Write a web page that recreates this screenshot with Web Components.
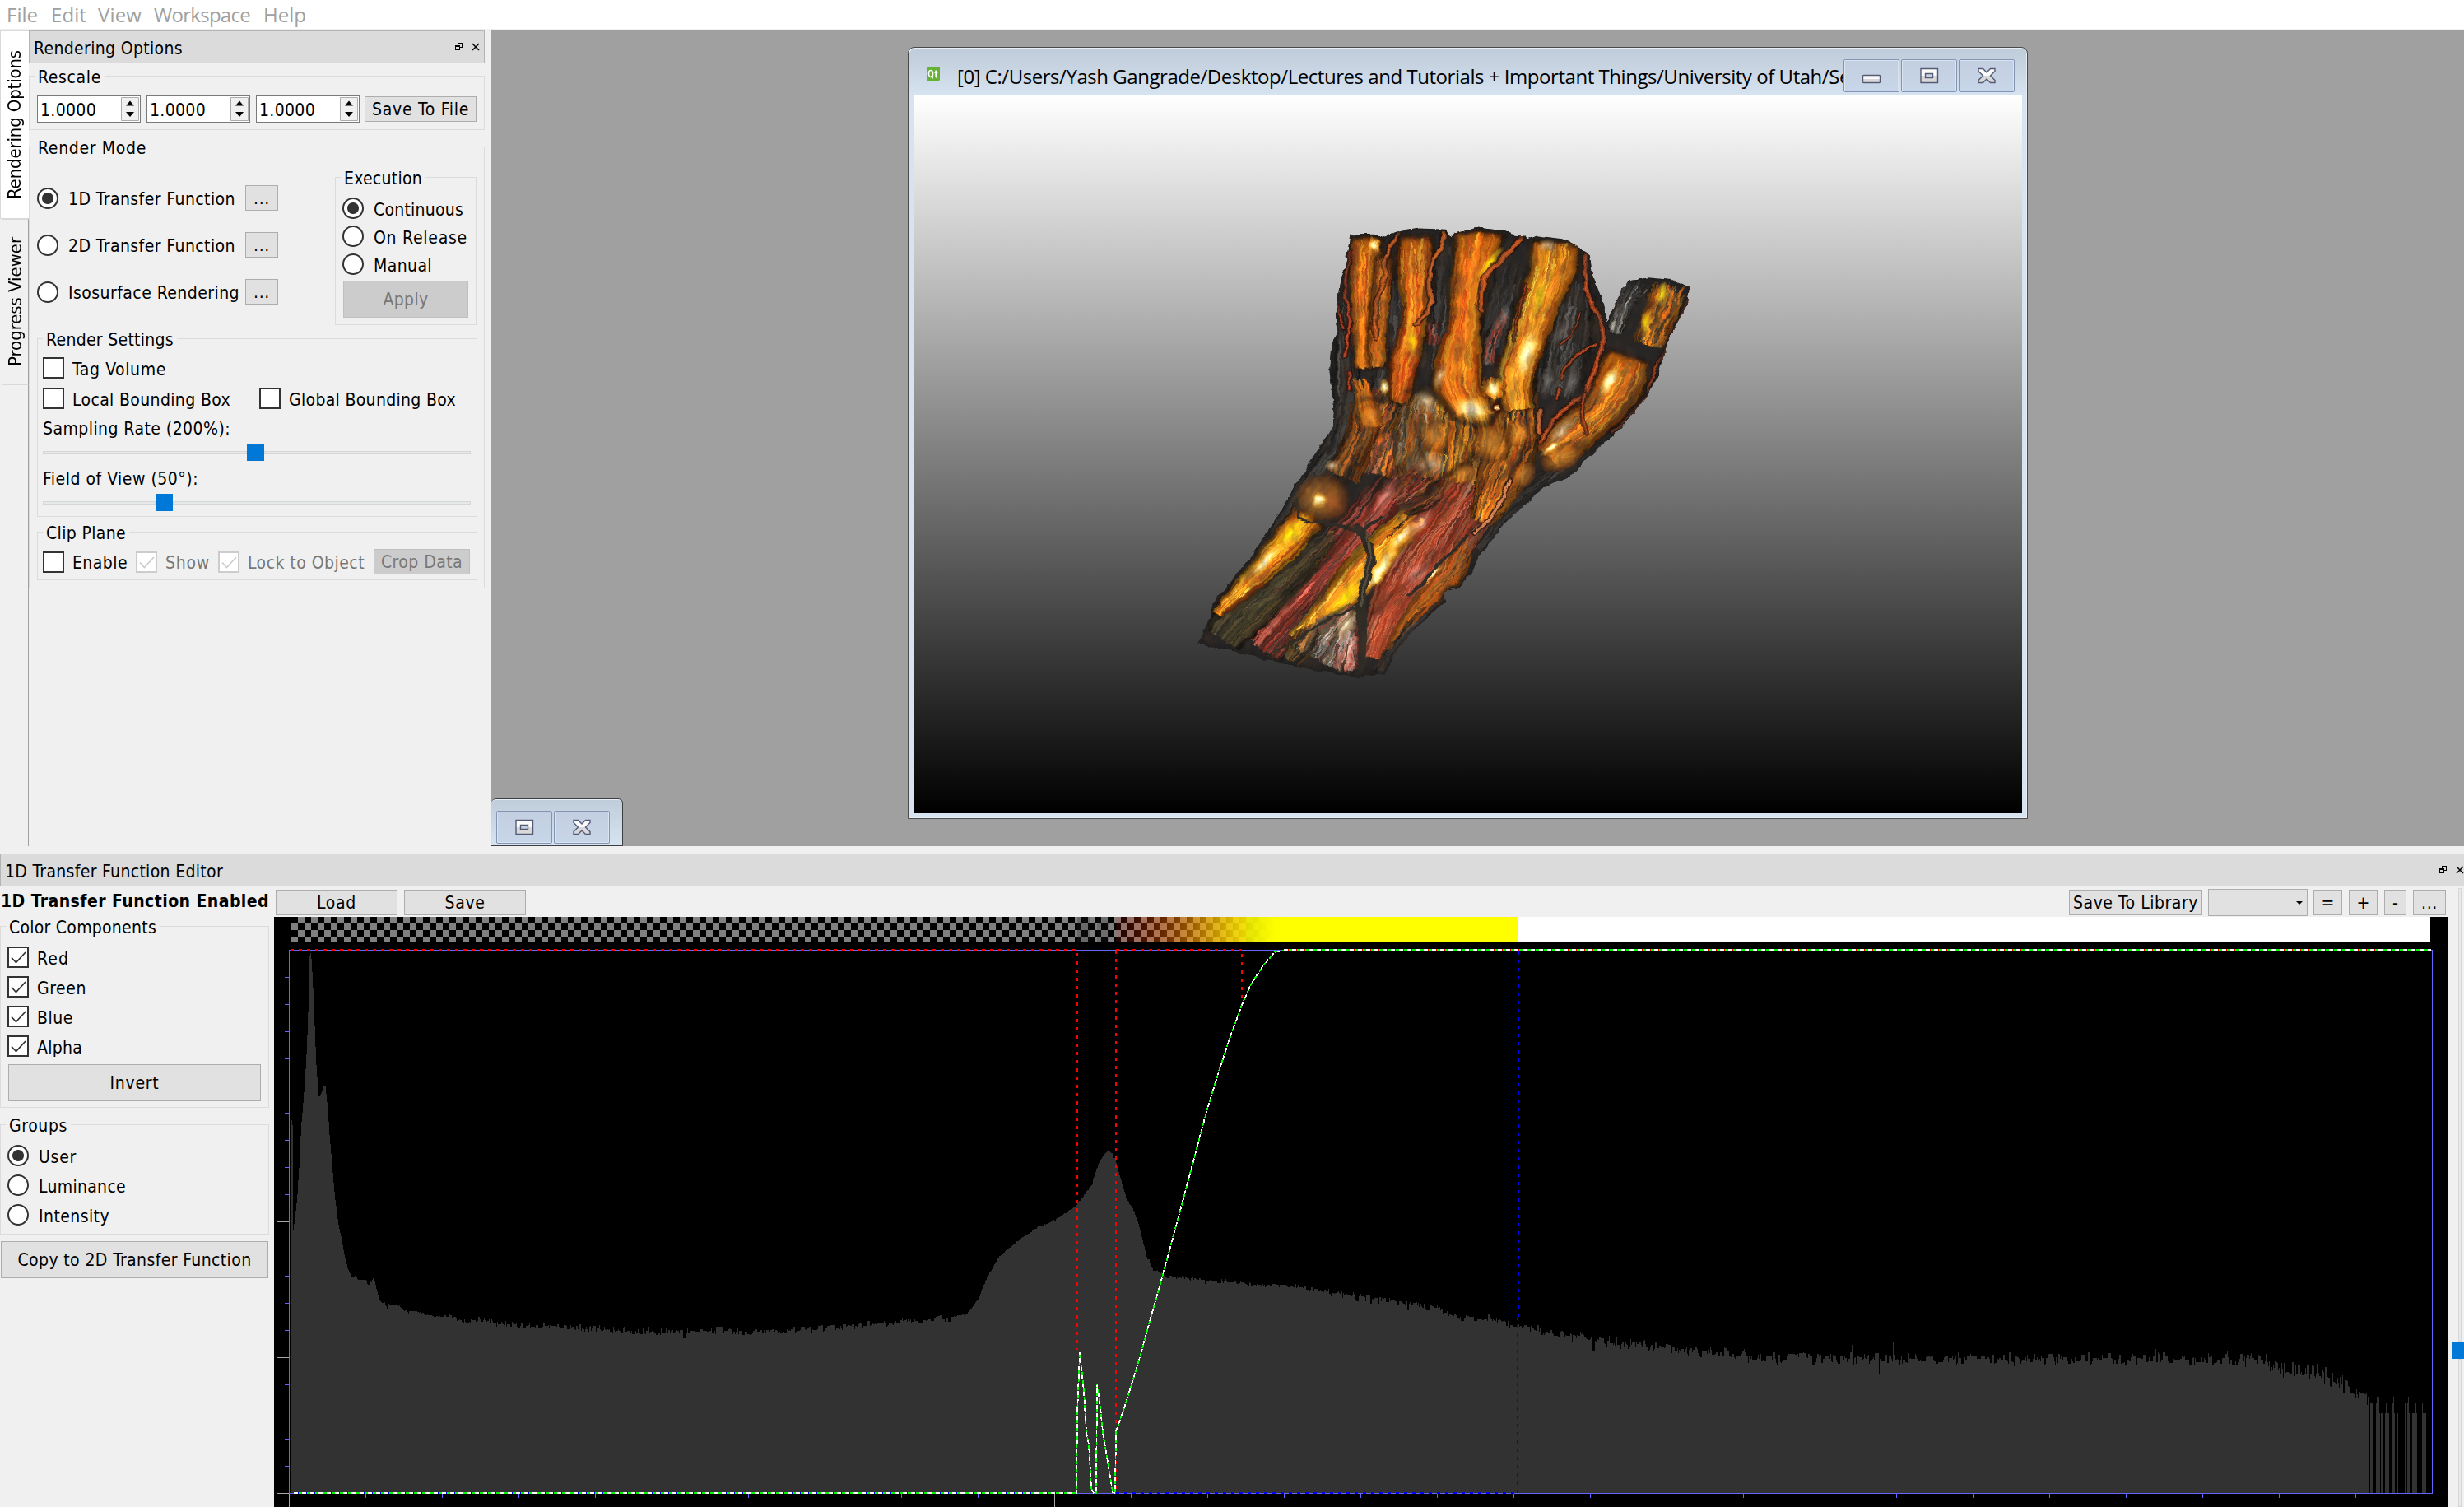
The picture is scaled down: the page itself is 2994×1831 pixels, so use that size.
<!DOCTYPE html>
<html lang="en">
<head>
<meta charset="utf-8">
<title>Volume Renderer</title>
<style>
html,body{margin:0;padding:0;background:#f0f0f0}
body{width:2994px;height:1831px;overflow:hidden;font:21px/26px "DejaVu Sans Condensed","DejaVu Sans","Liberation Sans",sans-serif;font-stretch:condensed;color:#000}
</style>
</head>
<body>
<iv-app></iv-app>
<script>
/* Base element: renders a template string and fits its label to a nominal width. */
class Base extends HTMLElement {
  connectedCallback() {
    if (this.shadowRoot) return;
    this.attachShadow({mode: 'open'}).innerHTML = '<style>*{box-sizing:border-box}:host{box-sizing:border-box;display:block}' + this.css() + '</style>' + this.html();
    this.fit();
  }
  css() { return ''; }
  html() { return '<slot></slot>'; }
  at(n, d = '') { return this.hasAttribute(n) ? this.getAttribute(n) : d; }
  fit() {
    const w = +this.at('w', 0), t = this.shadowRoot.querySelector('.t');
    if (!w || !t) return;
    const r = t.getBoundingClientRect(), n = (this.at('label') || this.textContent).trim().length;
    t.style.letterSpacing = ((w - (this.vertical ? r.height : r.width)) / n).toFixed(3) + 'px';
  }
}
const def = (n, c) => customElements.define(n, c);
const T = '<span class="t"><slot></slot></span>';
const TCSS = '.t{white-space:pre;display:inline-block;flex:none}';

class Label extends Base { css() { return TCSS + ':host{height:26px}'; } html() { return T; } }

class Menu extends Base {
  css() { return TCSS + ':host{font:24px/36px "Open Sans","Noto Sans",sans-serif;color:#a0a0a0}::slotted(u){text-underline-offset:4px;text-decoration-thickness:1px}'; }
  html() { return T; }
}

class Tab extends Base {
  get vertical() { return true; }
  css() { return TCSS + `:host{writing-mode:vertical-rl;transform:rotate(180deg);display:flex;align-items:center;justify-content:center;font-size:22px;border:1px solid #d9d9d9;border-left:0;background:#f0f0f0}
    :host([active]){background:#fff}:host(:not([active])){border-left:1px solid #a0a0a0}`; }
  html() { return T; }
}

class DockTitle extends Base {
  css() { return TCSS + ':host{display:flex;align-items:center;background:#dbdbdb;border:1px solid #b4b4b4;padding-left:5px;height:40px}.t{padding-top:3px}svg{margin-left:auto;flex:none}'; }
  html() { return T + `<svg width="30" height="10" shape-rendering="crispEdges"><path fill="none" stroke="#000" stroke-width="1" d="M.5 3.500h5v5h-5zM.5 4.500h5M3 3V.5h5v5H6M3 1.500h5"/><path shape-rendering="auto" stroke="#000" stroke-width="1.500" d="M21 1l8 8M29 1l-8 8"/></svg>`; }
}

class Group extends Base {
  css() { return TCSS + ':host{display:flex;flex-direction:column;border:1px solid #dcdcdc;flex:none}.h{align-self:flex-start;flex:none;background:#f0f0f0;margin:-12px 0 0 6px;padding:0 4px;height:26px}'; }
  html() { return `<div class="h"><span class="t">${this.at('label')}</span></div><slot></slot>`; }
}

class Btn extends Base {
  css() { return TCSS + ':host{display:flex;align-items:center;justify-content:center;background:#e1e1e1;border:1px solid #adadad;height:31px;flex:none}:host([off]){background:#ccc;border-color:#bfbfbf;color:#787878}.t{padding-top:1px}'; }
  html() { return T; }
}

class Radio extends Base {
  css() { return TCSS + ':host{display:flex;align-items:center;flex:none}i{width:26px;height:26px;border:2px solid #333;border-radius:50%;background:#fff;flex:none;margin-right:12px}:host([on]) i{background:radial-gradient(circle,#333 6.500px,#fff 7.500px)}.t{padding-top:3px}'; }
  html() { return '<i></i>' + T; }
}

class Check extends Base {
  css() { return TCSS + ':host{display:flex;align-items:center;flex:none}svg{flex:none;margin-right:10px}.t{padding-top:3px}:host([off]){color:#787878}'; }
  html() {
    const c = this.hasAttribute('off') ? '#ccc' : '#333';
    return `<svg width="26" height="26"><rect x="1" y="1" width="24" height="24" fill="#fff" stroke="${c}" stroke-width="2"/>${this.hasAttribute('on') ? `<path d="M5 13.500l5.500 6L22 7" fill="none" stroke="${c}" stroke-width="1.700"/>` : ''}</svg>` + T;
  }
}

class Spin extends Base {
  css() { return TCSS + ':host{display:flex;align-items:center;width:126px;height:33px;background:#fff;border:1px solid #7a7a7a;padding:0 1px 0 3px;flex:none}.t{padding-top:2px}svg{margin-left:auto}'; }
  html() { return T + '<svg width="22" height="29"><g fill="#f0f0f0" stroke="#adadad"><path d="M.5.500h21v14H.5zM.5 14.500h21v14H.5z"/></g><path d="M6 10.500l5-6 5 6zM6 18l5 6 5-6z"/></svg>'; }
}

class Slider extends Base {
  css() { return ':host{display:flex;align-items:center;height:21px;width:520px}.r{flex:1;height:4px;background:#e7eaea;border:1px solid #d6d6d6}.k{width:21px;height:21px;background:#0078d7}.a{width:' + this.at('pos') + 'px;flex:none}'; }
  html() { return '<div class="r a"></div><div class="k"></div><div class="r"></div>'; }
}

class VSlider extends Base {
  css() { return ':host{display:flex;flex-direction:column;align-items:flex-end;padding-top:2px}.r{width:4px;background:#e7eaea;border:1px solid #d6d6d6;margin-right:3px;flex:1}.a{height:551px;flex:none}.k{width:14px;height:21px;background:#0078d7}'; }
  html() { return '<div class="r a"></div><div class="k"></div><div class="r"></div>'; }
}

/* MDI caption button: kind is min, max or close. */
class CapBtn extends Base {
  css() { return ':host{width:68px;height:40px;flex:none;border:1px solid #8394b4;border-radius:2px;box-shadow:inset 0 0 0 1px #dbe5f1;background:linear-gradient(#c3cfe0,#c8d6e9)}svg{display:block;margin:-1px}'; }
  html() {
    const g = {
      min: '<rect x="23.500" y="19.500" width="21" height="9" rx="1"/>',
      max: '<path fill-rule="evenodd" d="M24 11.500h20.500v17H24zM29.500 17.500v5h9v-5z"/>',
      close: '<path d="M24 11.500h5.500l4.500 4.500 4.500-4.500H44v3l-5.500 5.500 5.500 5.500v3h-5.500l-4.500-4.500-4.500 4.500H24v-3l5.500-5.500-5.500-5.500z"/>'
    }[this.at('kind')];
    return `<svg width="68" height="40"><defs><linearGradient id="m" x2="0" y2="1"><stop offset=".5" stop-color="#fafafa"/><stop offset=".52" stop-color="#d9d9d9"/></linearGradient></defs><g fill="url(#m)" stroke="#555b75" stroke-width="1.400">${g}</g></svg>`;
  }
}

class MdiWindow extends Base {
  css() { return TCSS + `:host{display:flex;flex-direction:column;width:1361px;height:938px;border:1px solid #4a4a4a;border-radius:8px 8px 0 0;background:linear-gradient(#bfccd9,#c6d2df 20px,#d6e3f0 58px);padding:0 6px 6px;box-shadow:inset 1px 1px 0 #e8eef5,inset -1px -1px 0 #e8eef5}
    .bar{display:flex;height:57px;flex:none}.cap{display:flex;align-items:center;width:1130px;overflow:hidden;padding:13px 0 0 16px;font:24px/32px "Open Sans","Noto Sans",sans-serif}.cap svg{margin:-6px 21px 0 0;flex:none}.b{display:flex;gap:2px;padding-top:14px}.view{flex:1;background:linear-gradient(#fff,#000);display:flex}`; }
  html() { return `<div class="bar"><div class="cap"><svg width="16" height="16"><path fill="#66b036" d="M1 0h15v15l-1 1H0V1z"/><g fill="none" stroke="#fff" stroke-width="1.700"><ellipse cx="5" cy="7.500" rx="2.500" ry="4"/><path d="M5.500 10l2 3.500M11.200 3.500v7q0 1.800 2 1.300M9.200 6h4.300"/></g></svg><span class="t">${this.at('label')}</span></div>
    <div class="b"><cap-btn kind="min"></cap-btn><cap-btn kind="max"></cap-btn><cap-btn kind="close"></cap-btn></div></div><div class="view"><slot></slot></div>`; }
}

/* Small seeded generator so the drawing is stable between loads. */
const rng = s => () => { s = s * 1664525 + 1013904223 >>> 0; return s / 4294967296; };

/* The rendered hand volume. */
class HandVolume extends Base {
  css() { return ':host{width:660px;height:600px;margin:135px 0 0 320px}svg{display:block}'; }
  html() {
    const R = rng(77), out = [];
    const mix = (c, k) => 'rgb(' + c.map(v => Math.max(0, Math.min(255, Math.round(v * k)))).join() + ')';
    const O = [[228,118,22],[205,88,20],[235,145,38],[190,110,24],[214,165,45],[176,62,22]],
          Br = [[150,72,24],[105,48,18],[180,98,30],[130,95,38]],
          Y = [[240,200,30],[225,150,25],[245,228,90],[200,130,20]],
          D = [[44,44,44],[28,28,28],[60,60,58],[78,78,78],[36,34,30]],
          Dg = [[60,58,38],[36,36,30],[84,80,58],[96,78,40],[30,30,30]],
          Rd = [[150,48,36],[112,36,28],[180,76,62],[80,32,26],[190,105,90]],
          Pk = [[165,72,48],[188,105,75],[140,58,32],[205,140,108],[158,44,24],[110,50,28]],
          Gw = [[130,130,125],[170,168,160],[80,80,78],[205,200,190],[110,105,60]];
    const line = p => { let d = 'M' + p[0]; for (let i = 1; i < p.length - 1; i++) d += 'Q' + p[i] + ' ' + [(p[i][0] + p[i+1][0]) / 2 | 0, (p[i][1] + p[i+1][1]) / 2 | 0]; return d + 'L' + p[p.length-1]; };
    const sample = (P, u) => { const f = u * (P.length - 1), i = Math.min(P.length - 2, f | 0), k = f - i; return [0,1,2].map(j => P[i][j] * (1-k) + P[i+1][j] * k); };
    const strand = (P, pal, n, edge = 1) => {
      if (edge) {
        const l = [], r = [];
        P.forEach((p, i) => { const a = P[Math.max(0, i-1)], b = P[Math.min(P.length-1, i+1)], L = Math.hypot(b[0]-a[0], b[1]-a[1]), nx = -(b[1]-a[1])/L, ny = (b[0]-a[0])/L; l.push([p[0]+nx*p[2], p[1]+ny*p[2]]); r.unshift([p[0]-nx*p[2], p[1]-ny*p[2]]); });
        out.push(`<path d="M${l.concat(r).join('L')}Z" fill="${mix(pal[0], .7)}" stroke="#1d0e08" stroke-opacity=".8" stroke-width="14" stroke-linejoin="round" filter="url(#b)"/>`);
      }
      for (let i = 0; i < n; i++) {
        const t = R() * 2 - 1, s = R() * .85, e = Math.min(1, s + .15 + R() * .45), c = pal[R() * pal.length | 0], q = [];
        for (let j = 0; j <= 5; j++) {
          const u = s + (e - s) * j / 5, p = sample(P, u), a = sample(P, Math.max(0, u-.06)), b = sample(P, Math.min(1, u+.06)), L = Math.hypot(b[0]-a[0], b[1]-a[1]) || 1;
          q.push([+(p[0] - (b[1]-a[1])/L*p[2]*t + R()*7-3.5).toFixed(1), +(p[1] + (b[0]-a[0])/L*p[2]*t + R()*7-3.5).toFixed(1)]);
        }
        out.push(`<path d="${line(q)}" stroke="${mix(c, (1.12 - .65*t*t) * (.82 + R()*.36))}" stroke-width="${(1.5+R()*6.5).toFixed(1)}" opacity="${(.3+R()*.45).toFixed(2)}"/>`);
      }
    };
    const blob = (x, y, rx, ry, a, g) => out.push(`<ellipse stroke="none" cx="${x}" cy="${y}" rx="${rx}" ry="${ry}" transform="rotate(${a} ${x} ${y})" fill="url(#${g})"/>`);
    const ves = (d, w, c = '#8a3518') => out.push(`<path d="${d}" stroke="#24100a" stroke-width="${w+9}" opacity=".7"/><path d="${d}" stroke="${c}" stroke-width="${w}"/><path d="${d}" stroke="#d07040" stroke-width="${w/4}" opacity=".6"/>`);
    /* interosseous and muscle tissue */
    strand([[480,180,25],[485,400,35],[490,620,45],[440,780,60]], D, 160, 0);
    strand([[630,200,30],[625,450,35],[600,620,50]], D, 110, 0);
    strand([[775,120,35],[765,360,35],[740,520,40]], D, 110, 0);
    strand([[970,160,45],[930,340,50],[900,500,40]], D, 130, 0);
    strand([[1160,230,50],[1130,420,90],[1090,600,70]], D, 260, 0);
    strand([[1240,720,50],[1120,850,50],[980,950,35],[880,1090,35]], D, 200, 0);
    strand([[470,780,60],[370,920,50],[240,1120,25],[110,1280,15]], D, 130, 0);
    strand([[740,360,20],[740,440,22]], Rd, 30, 0);
    strand([[945,330,16],[915,420,28],[900,500,26]], Rd.concat(D), 70, 0);
    /* forearm */
    strand([[890,840,95],[800,990,100],[700,1140,95],[610,1290,60],[560,1430,48]], Pk.concat(Rd.slice(0,2)), 640, 0);
    strand([[650,860,60],[520,1050,70],[380,1230,78],[240,1400,72]], Rd.concat(D.slice(0,1)), 520, 0);
    strand([[450,1030,36],[320,1160,66],[190,1290,80],[130,1370,60]], Dg, 400, 0);
    strand([[380,985,46],[315,1075,46],[235,1170,34],[120,1290,14]], O.concat(Y), 220);
    strand([[700,980,46],[610,1065,50],[520,1180,60],[430,1290,38],[340,1370,14]], Y.concat(O), 380, 0);
    strand([[520,1270,24],[450,1370,70],[410,1440,100]], Gw.concat(Dg.slice(1,3), Rd.slice(2,3)), 300, 0);
    strand([[500,1350,28],[485,1470,36]], [[200,130,118],[165,62,45],[220,175,165]], 70, 0);
    strand([[400,1310,20],[370,1390,45],[330,1440,30]], Dg.concat(Br), 90, 0);
    strand([[840,1050,22],[800,1160,38],[700,1270,32],[640,1370,20],[590,1470,14]], Br.concat(O.slice(0,2)), 190, 0);
    strand([[760,1250,14],[690,1330,22],[640,1400,18],[580,1480,20]], D, 80, 0);
    /* carpal area */
    strand([[650,600,90],[600,720,110],[570,850,100]], Br.concat(Dg, Rd, O.slice(0,3)), 420, 0);
    strand([[800,600,120],[800,720,180],[780,870,150]], O.concat(Br, Dg.slice(0,3), Y.slice(1,2)), 620, 0);
    strand([[980,600,60],[980,740,75],[930,880,70],[880,1000,35]], O.concat(Br, D.slice(0,2)), 320, 0);
    strand([[540,600,34],[540,720,45],[480,860,55]], Br.concat(D.slice(0,2)), 180, 0);
    strand([[700,620,44],[690,720,64],[660,830,45]], Gw.concat(Dg.slice(0,2), Br), 190, 0);
    strand([[760,830,60],[700,900,70],[640,950,50]], Br.concat(D, Rd), 150, 0);
    /* metacarpals */
    strand([[545,102,44],[540,210,38],[540,320,33],[540,420,29],[538,510,22]], O, 230);
    strand([[600,160,24],[590,280,24],[578,400,26],[575,510,22]], Br.concat(O), 140);
    strand([[535,550,26],[545,620,30],[565,700,34]], O, 100, 0);
    strand([[692,102,46],[688,190,48],[690,300,37],[682,400,33],[655,500,40],[640,620,26]], O.concat([[180,50,22],[150,50,20]]), 290);
    strand([[870,86,72],[862,160,58],[838,260,48],[832,380,41],[815,480,64],[808,570,68],[845,650,54]], O, 460);
    strand([[1092,118,68],[1088,200,66],[1045,310,55],[1010,430,52],[975,540,50],[985,640,42]], O.concat(Y.slice(1)), 440);
    strand([[920,545,36],[912,610,32]], O, 70, 0);
    strand([[1425,248,54],[1395,350,50],[1365,440,46]], Br.concat(Dg.slice(0,3), Y.slice(1,2), O.slice(0,3)), 280, 0);
    strand([[1305,480,60],[1275,560,74],[1225,650,58],[1140,730,58],[1075,795,44]], O.concat(Br, Dg.slice(2,4)), 420);
    strand([[1330,235,40],[1290,310,32],[1265,400,20]], D.concat(Gw.slice(0,3)), 150, 0);
    blob(850,645,72,46,12,'hot'); blob(910,755,70,66,0,'bone'); blob(985,720,44,48,0,'bone'); blob(420,930,88,82,-20,'bone');
    blob(450,940,70,50,60,'pinkb'); blob(410,935,30,28,0,'hot'); blob(1110,800,72,46,-25,'bone'); blob(750,730,50,60,20,'bone'); blob(735,820,58,50,10,'pale');
    blob(720,620,52,46,40,'pale'); blob(825,850,40,40,0,'bone'); blob(1000,855,38,50,30,'bone'); blob(560,670,38,46,0,'bone');
    blob(450,825,30,22,-20,'pale');
    /* highlights */
    blob(590,1150,26,120,33,'hot'); blob(585,1160,18,100,33,'hot'); blob(650,1050,20,75,40,'hot'); blob(330,1040,34,94,42,'yel'); blob(255,1130,16,90,40,'hot');
    blob(490,1240,30,100,45,'yel'); blob(1010,470,34,110,14,'hot'); blob(1250,555,26,70,28,'hot'); blob(570,125,18,26,0,'hot'); blob(905,180,16,70,38,'yel');
    blob(680,430,18,60,0,'yel'); blob(1045,290,18,80,10,'yel'); blob(915,580,28,36,0,'hot'); blob(600,575,12,28,0,'hot');
    blob(760,540,22,50,20,'pale'); blob(1110,715,28,74,38,'pale'); blob(1400,280,20,40,10,'yel'); blob(1355,370,16,50,10,'yel'); blob(1070,125,35,26,0,'pale');
    blob(600,920,24,76,30,'pink'); blob(700,1010,28,74,42,'pink'); blob(690,1170,52,74,35,'pink'); blob(490,1330,28,60,30,'pale');
    blob(740,1170,12,50,42,'hot'); blob(1080,770,12,44,50,'hot'); blob(1140,560,30,62,20,'grey'); blob(1070,560,24,60,10,'grey'); blob(1110,400,22,60,25,'grey'); blob(945,350,18,50,15,'grey');
    /* contour striping on the cut muscle */
    for (let i = 0; i < 12; i++) out.push(`<path d="M${600+i*15} ${1215-i*4}Q${640+i*16} ${1110-i*10} ${760+i*8} ${1010-i*6}" stroke="${i % 2 ? '#d0967c' : '#6e2c1c'}" stroke-width="2.500" opacity=".55"/>`);
    /* vessels */
    ves('M640 88Q600 150 600 190Q605 240 580 290Q565 370 575 420',10,'#96461a');
    ves('M770 85Q775 130 745 165Q720 220 735 300Q725 350 690 375',11,'#9c4c1c');
    ves('M995 100Q960 150 900 210Q870 260 880 330',12,'#a8481a');
    ves('M1182 155Q1170 240 1200 320Q1250 400 1220 470Q1200 540 1180 600Q1130 630 1090 680Q1060 730 1050 750',12);
    ves('M1210 440Q1150 470 1120 520L1110 550M1103 585l-6 28M1175 600Q1165 670 1180 720',7);
    ves('M500 150Q480 250 485 300Q510 350 492 420L486 480M462 320Q475 350 482 390M500 530L495 580',8,'#842a16');
    ves('M1475 300Q1440 390 1400 480Q1360 560 1360 600Q1300 680 1260 720',7,'#7c3015');
    ves('M1165 340Q1150 400 1110 440M1010 250Q980 330 975 430',4,'#7c2c1c');
    ves('M1050 650Q1040 690 1050 720',12,'#9c5228');
    ves('M960 870Q945 940 900 1000L860 1040',8,'#c88058');
    out.push('<g stroke="#2a2824" fill="none"><path d="M520 1020Q560 1070 560 1130Q540 1200 530 1270Q545 1380 530 1490" stroke-width="24"/><path d="M520 1035Q460 1010 430 1010M535 1030L590 990" stroke-width="10"/><path d="M835 1050Q800 1100 750 1140Q710 1210 670 1235" stroke-width="10"/><path d="M520 1275Q430 1310 360 1370L260 1430" stroke-width="8"/><path d="M350 930L350 990Q380 1010 430 1000" stroke-width="7"/></g><g stroke="#1e120c" filter="url(#b)" opacity=".6"><path d="M660 590Q720 560 770 620Q800 690 860 695Q910 700 930 650M530 620Q600 600 640 640M580 730Q640 690 640 620" stroke-width="14"/><path d="M640 960Q700 950 740 880Q800 850 860 790M480 880Q540 800 560 740M560 950Q600 860 640 830" stroke-width="18"/><path d="M960 700Q960 760 950 810M1040 740Q980 800 960 860M800 700Q830 760 850 800M690 690Q700 780 740 870" stroke-width="12"/><path d="M500 1010Q470 1100 380 1190L240 1400M620 970Q560 1080 470 1170L300 1350M850 960Q790 1090 640 1220L560 1300" stroke-width="8"/></g><path d="M545 1040Q562 1080 558 1130Q538 1200 532 1270" stroke="#67614a" stroke-width="6" opacity=".6"/>');
    blob(922,640,18,24,0,'eye');
    const sil = 'M500 90L570 88L600 98L650 80L700 72L780 75L792 100L803 85L860 68L930 78L965 92L1005 96L1012 108L1040 95L1110 105L1170 140L1192 155L1200 220L1225 290L1243 365L1275 290L1300 240L1360 228L1430 235L1482 262L1475 310L1440 380L1410 450L1390 540L1360 600L1310 670L1260 730L1200 790L1140 855L1060 895L1000 950L930 1030L870 1120L850 1170L810 1215L770 1230L778 1256L720 1310L670 1360L630 1420L600 1488L550 1490L535 1498L400 1475L240 1435L60 1392L95 1310L105 1255L160 1190L230 1090L290 990L340 890L400 790L450 700L455 640L440 520L445 440L465 400L458 340L470 250L490 170Z';
    const rg = (id, st) => `<radialGradient id="${id}">${st.map(s => `<stop offset="${s[0]}" stop-color="${s[1]}" stop-opacity="${s[2]}"/>`).join('')}</radialGradient>`;
    return `<svg width="660" height="600" viewBox="0 0 1568 1568" preserveAspectRatio="none"><defs><clipPath id="c"><path d="${sil}"/></clipPath>
      ${rg('hot',[[0,'#fffff0',.95],[.35,'#fff3a0',.8],[.7,'#f0b030',.4],[1,'#e08020',0]])}${rg('bone',[[0,'#dc9438',.7],[.5,'#b87020',.6],[.8,'#703810',.5],[1,'#2a1208',0]])}
      ${rg('pale',[[0,'#e8dcb8',.75],[.5,'#b89868',.45],[1,'#806030',0]])}${rg('yel',[[0,'#fff000',.85],[.6,'#e8b818',.5],[1,'#d08010',0]])}${rg('pink',[[0,'#e8a8a0',.7],[.6,'#c06050',.35],[1,'#a04030',0]])}${rg('pinkb',[[0,'#a04828',.5],[1,'#401808',0]])}
      ${rg('grey',[[0,'#989898',.5],[1,'#505050',0]])}${rg('eye',[[0,'#fff0c0',1],[.3,'#c08040',1],[.5,'#301008',1],[1,'#301008',.2]])}
      <filter id="b" x="-20%" y="-20%" width="140%" height="140%"><feGaussianBlur stdDeviation="5"/></filter>
      <filter id="w" x="-5%" y="-5%" width="110%" height="110%" color-interpolation-filters="sRGB"><feTurbulence type="fractalNoise" baseFrequency=".03" numOctaves="3" seed="4"/><feDisplacementMap in="SourceGraphic" scale="16" xChannelSelector="R" yChannelSelector="G"/><feComponentTransfer><feFuncR type="linear" slope="1.140"/><feFuncG type="linear" slope="1.120"/><feFuncB type="linear" slope="1.100"/></feComponentTransfer></filter>
      <filter id="n" x="0" y="0" width="100%" height="100%"><feTurbulence type="fractalNoise" baseFrequency=".03 .014" numOctaves="4" seed="9"/><feColorMatrix values="0 0 0 0 .05  0 0 0 0 .03  0 0 0 0 .02  2.400 0 0 0 -1.050"/></filter></defs>
      <g filter="url(#w)"><g clip-path="url(#c)"><path d="${sil}" fill="#232222"/><g fill="none" stroke-linecap="round" stroke-linejoin="round">${out.join('')}</g>
      <rect width="1568" height="1568" filter="url(#n)" opacity=".5"/><path d="${sil}" fill="none" stroke="#1c1b1b" stroke-width="16" opacity=".85" filter="url(#b)"/></g></g></svg>`;
  }
}

/* 1D transfer function plot: colour bar, histogram, axes and channel curves. */
class TfPlot extends Base {
  css() { return ':host{width:2641px;height:717px;background:#000}svg{display:block}'; }
  html() {
    const R = rng(5);
    const A = [[102,560],[106,577],[108,845],[113,820],[118,790],[122,765],[127,705],[130,674],[133,640],[136,580],[140,550],[145,505],[151,448],[154,415],[157,372],[160,318],[163,258],[166,150],[169,122],[172,125],[175,148],[178,187],[181,232],[184,280],[187,332],[190,386],[193,430],[197,465],[199,498],[206,498],[212,485],[217,470],[225,470],[230,505],[235,543],[240,598],[246,648],[251,690],[256,730],[260,762],[267,800],[274,838],[283,865],[292,903],[306,945],[322,970],[337,964],[343,976],[373,975],[379,990],[388,988],[402,967],[410,995],[422,1022],[440,1034],[450,1050],[458,1040],[490,1042],[520,1058],[560,1058],[620,1070],[680,1070],[740,1088],[780,1078],[850,1090],[920,1092],[1000,1095],[1200,1100],[1350,1108],[1500,1110]].map(p => [320+p[0]/3, 1100+p[1]/2.145]);
    const B = [[880,1618],[955,1617],[1069,1609],[1146,1602],[1174,1597],[1188,1579],[1199,1552],[1214,1526],[1238,1507]];
    const C = [[0,880],[45,852],[100,830],[160,795],[205,740],[220,697],[240,662],[255,652],[265,660],[275,685],[290,730],[305,775],[325,805],[340,845],[355,895],[367,932],[375,945],[382,962],[400,962],[410,975],[440,978],[520,985],[600,990],[700,1000],[800,1003],[900,1018],[1000,1033],[1100,1042],[1200,1060],[1270,1085],[1350,1085],[1435,1105],[1500,1115],[1568,1125]].map(p => [1240+p[0]/2.3758, 1090+p[1]/2.1189]);
    const D = [[1947,1629],[2024,1638],[2138,1650],[2291,1651],[2482,1651],[2673,1651],[2743,1651],[2767,1663],[2800,1666],[2833,1674],[2857,1684],[2879,1698]];
    const H = A.concat(B, C, D);
    let d = 'M354 1814', k = 0, prev = 0;
    for (let x = 354; x < 2879; x++) {
      while (k < H.length - 2 && H[k+1][0] <= x) k++;
      const a = H[k], b = H[k+1], y = a[1] + (b[1]-a[1]) * Math.min(1, Math.max(0, (x-a[0])/(b[0]-a[0])));
      const amp = x < 450 ? 0 : x < 560 ? 3 : x < 1165 ? 7 : x < 1380 ? 1.5 : x < 1600 ? 4 : x < 1900 ? 8 : x < 2100 ? 10 : x < 2700 ? 13 : 17;
      if (R() < .62) prev = (R() + R() - 1) * amp * (R() < .04 ? 1.7 : .8);
      d += `V${Math.round(y + prev)}H${x+1}`;
    }
    d += 'V1814Z';
    [[540,549,435],[549,552,470],[561,574,435],[564,567,411],[570,573,411],[574,577,470],[579,585,470],[594,609,470],[597,600,435],[621,627,435],[624,627,411],[627,630,470],[636,642,470],[666,672,435],[675,681,435],[678,681,411],[681,684,470],[693,711,470],[702,708,435],[729,732,435],[732,735,470],[738,744,470],[753,756,470]].forEach(b => { d += `M${2700+b[0]/3} 1814V${Math.round(1560+b[2]/3)}H${2700+b[1]/3}V1814Z`; });
    let minor = '', major = '';
    for (let i = 0; i <= 20; i++) (i % 5 ? minor += `M346 ${1154.5+33*i}h5` : i && (major += `M336 ${1154.5+33*i}h15`));
    for (let i = 0; i < 28; i++) (i % 10 ? minor += `M${351.5+93*i} 1815v5` : major += `M${351.5+93*i} 1815v16`);
    const rise = [[1356,1739],[1366,1711],[1375,1682],[1385,1649],[1396,1609],[1408,1567],[1421,1519],[1438,1456],[1450,1411],[1467,1347],[1480,1305],[1493,1265],[1509,1221],[1520,1196],[1535,1173],[1549,1157],[1560,1154.5]];
    const curve = 'M357 1814H1308L1309 1718L1312 1643L1317 1690L1320 1740L1323 1755L1326 1808L1329 1814H1332L1333 1682L1337 1710L1340 1740L1352 1813L1355 1814L' + rise.join('L');
    const top = 'M1560 1154H2954';
    const stops = rise.map(p => { const a = (1814.5 - p[1]) / 660; return `<stop offset="${((p[0]-1356)/204).toFixed(3)}" stop-color="rgb(${p[0] > 1509 ? Math.round(a*255) : 255},${Math.round(a*255)},0)" stop-opacity="${a.toFixed(3)}"/>`; }).join('');
    return `<svg width="2641" height="717" viewBox="333 1114 2641 717" shape-rendering="crispEdges"><defs>
      <pattern id="k" x="354" y="1114" width="16" height="16" patternUnits="userSpaceOnUse"><rect width="16" height="16"/><path fill="#808080" d="M8 0h8v8H8zM0 8h8v8H0z"/></pattern>
      <linearGradient id="g">${stops}</linearGradient></defs>
      <rect x="354" y="1114" width="1206" height="30" fill="url(#k)"/><rect x="1309" y="1114" width="16" height="30" fill="#222" opacity=".25"/><rect x="1333" y="1114" width="14" height="30" fill="#222" opacity=".2"/>
      <rect x="1356" y="1114" width="204" height="30" fill="url(#g)"/><rect x="1560" y="1114" width="284" height="30" fill="#ff0"/><rect x="1844" y="1114" width="1109" height="30" fill="#fff"/>
      <path d="${d}" fill="#323232"/>
      <g fill="none"><path d="M351.500 1154.500H2955.500V1814.500H351.500Z${minor}" stroke="#6464ff"/><path d="${major}" stroke="#a8a8a8"/>
      <path d="M353 1154H1309M1356 1154H1509M1309 1158V1640M1356 1155V1814M1509 1159V1222" stroke="#f00" stroke-width="2" stroke-dasharray="4 6"/>
      <path d="M357 1814H1308" stroke="#00f" stroke-width="2"/><path d="M1356 1814H1844M1845 1156V1600M1844 1600V1814" stroke="#00f" stroke-width="2" stroke-dasharray="4 6"/>
      <path d="${top}" stroke="#f00" stroke-width="2"/><path d="${curve}" stroke="#0f0" stroke-width="1.800" stroke-dasharray="4 6" stroke-dashoffset="4"/><path d="${top}" stroke="#0f0" stroke-width="2" stroke-dasharray="4 6" stroke-dashoffset="4"/>
      <path d="${curve}" stroke="#fff" stroke-width="1.800" stroke-dasharray="5 5"/><path d="${top}" stroke="#fff" stroke-width="2" stroke-dasharray="5 5"/></g></svg>`;
  }
}

class App extends Base {
  css() { return `
    :host{display:flex;flex-direction:column;width:2994px;height:1831px;background:#f0f0f0}
    .row{display:flex}.col{display:flex;flex-direction:column}
    .menu{height:36px;flex:none;background:#fff;border-bottom:1px solid #f0f0f0}
    .top{height:992px;flex:none}.tabs{width:35px;border-right:1px solid #a0a0a0;padding-top:1px}.tabs>*{flex:none}
    .panel{width:554px;padding-top:1px;margin-right:8px}
    .mdi{flex:1;background:#a0a0a0;align-items:flex-start;position:relative;overflow:hidden}
    .mini{position:absolute;left:0;bottom:0;width:160px;height:58px;border:1px solid #3f3f3f;border-left:0;border-radius:6px 6px 0 0;background:linear-gradient(#bfccd9,#d6e3f0);padding:14px 0 0 6px;gap:2px;box-shadow:inset 0 1px 0 #e8eef5}
    .r{margin-left:9px}.bottom{flex:1}.left{width:333px}.bar{height:37px;padding:4px 0 0 2px;width:2641px}`; }
  html() { return `
    <div class="row menu"><iv-menu w="38" style="margin-left:8px"><u>F</u>ile</iv-menu><iv-menu w="43" style="margin-left:16px">Edit</iv-menu><iv-menu w="53" style="margin-left:14px"><u>V</u>iew</iv-menu><iv-menu w="117" style="margin-left:15px">Workspace</iv-menu><iv-menu w="52" style="margin-left:16px"><u>H</u>elp</iv-menu></div>
    <div class="row top">
      <div class="col tabs"><iv-tab active w="181" style="height:229px;width:35px">Rendering Options</iv-tab><iv-tab w="157" style="height:202px;width:33px;margin-left:2px">Progress Viewer</iv-tab></div>
      <div class="col panel">
        <dock-title w="181" style="padding-right:5px">Rendering Options</dock-title>
        <group-box label="Rescale" w="77" style="margin-top:15px;height:66px">
          <div class="row r" style="margin-top:9px;align-items:center"><spin-box w="68">1.0000</spin-box><spin-box w="68" style="margin-left:7px">1.0000</spin-box><spin-box w="68" style="margin-left:7px">1.0000</spin-box><push-button w="118" style="width:136px;margin-left:6px">Save To File</push-button></div>
        </group-box>
        <group-box label="Render Mode" w="132" style="margin-top:20px;height:537px">
          <div class="row" style="height:218px;flex:none">
            <div class="col r" style="width:362px;padding-top:32px;gap:26px">
              <div class="row"><radio-item on w="203" style="width:253px">1D Transfer Function</radio-item><push-button w="20" style="width:40px">...</push-button></div>
              <div class="row"><radio-item w="203" style="width:253px">2D Transfer Function</radio-item><push-button w="20" style="width:40px">...</push-button></div>
              <div class="row"><radio-item w="208" style="width:253px">Isosurface Rendering</radio-item><push-button w="20" style="width:40px">...</push-button></div>
            </div>
            <group-box label="Execution" w="95" style="width:172px;height:180px;margin-top:22px">
              <div class="col" style="margin:6px 0 0 8px"><radio-item on w="109" style="height:34px">Continuous</radio-item><radio-item w="114" style="height:34px">On Release</radio-item><radio-item w="71" style="height:34px">Manual</radio-item></div>
              <push-button off w="55" style="width:152px;height:45px;margin:3px 0 0 9px">Apply</push-button>
            </group-box>
          </div>
          <group-box label="Render Settings" w="155" style="width:535px;height:217px;margin-left:9px">
            <div class="col" style="margin:8px 0 0 6px">
              <check-item w="114" style="height:26px">Tag Volume</check-item>
              <div class="row" style="margin-top:11px;height:26px"><check-item w="192" style="width:263px">Local Bounding Box</check-item><check-item w="203">Global Bounding Box</check-item></div>
              <text-label w="228" style="margin-top:11px">Sampling Rate (200%):</text-label><slide-bar pos="248" style="margin-top:5px"></slide-bar>
              <text-label w="189" style="margin-top:9px">Field of View (50°):</text-label><slide-bar pos="137" style="margin-top:5px"></slide-bar>
            </div>
          </group-box>
          <group-box label="Clip Plane" w="97" style="width:535px;height:59px;margin:18px 0 0 9px">
            <div class="row" style="margin:6px 0 0 6px;height:31px"><check-item w="67" style="width:113px">Enable</check-item><check-item off on w="54" style="width:100px">Show</check-item><check-item off on w="142" style="width:189px">Lock to Object</check-item><push-button off w="99" style="width:117px">Crop Data</push-button></div>
          </group-box>
        </group-box>
      </div>
      <div class="row mdi">
        <div class="row mini"><cap-btn kind="max"></cap-btn><cap-btn kind="close"></cap-btn></div>
        <mdi-window w="1085" label="[0] C:/Users/Yash Gangrade/Desktop/Lectures and Tutorials + Important Things/University of Utah/Se" style="margin:21px 0 0 506px"><hand-volume></hand-volume></mdi-window>
      </div>
    </div>
    <dock-title w="265" style="margin-top:9px;flex:none;border-right:0">1D Transfer Function Editor</dock-title>
    <div class="row bottom">
      <div class="col left">
        <text-label w="326" style="font-weight:bold;margin:5px 0 0 1px">1D Transfer Function Enabled</text-label>
        <group-box label="Color Components" w="179" style="width:327px;height:221px;margin-top:17px">
          <div class="col" style="margin:5px 0 0 8px"><check-item on w="39" style="height:36px">Red</check-item><check-item on w="60" style="height:36px">Green</check-item><check-item on w="44" style="height:36px">Blue</check-item><check-item on w="55" style="height:36px">Alpha</check-item></div>
          <push-button w="60" style="width:307px;height:45px;margin:4px 0 0 9px">Invert</push-button>
        </group-box>
        <group-box label="Groups" w="71" style="width:327px;height:134px;margin-top:20px">
          <div class="col" style="margin:5px 0 0 8px"><radio-item on w="46" style="height:36px">User</radio-item><radio-item w="106" style="height:36px">Luminance</radio-item><radio-item w="86" style="height:36px">Intensity</radio-item></div>
        </group-box>
        <push-button w="284" style="width:325px;height:45px;margin:8px 0 0 1px">Copy to 2D Transfer Function</push-button>
      </div>
      <div class="col">
        <div class="row bar"><push-button w="48" style="width:148px">Load</push-button><push-button w="49" style="width:148px;margin-left:8px">Save</push-button>
          <push-button w="152" style="width:162px;margin-left:auto">Save To Library</push-button>
          <push-button style="width:121px;height:33px;margin:-1px 0 0 7px;justify-content:flex-end;padding-right:5px"><svg width="8" height="4" style="display:block"><path d="M0 0h8L4 4z"/></svg></push-button>
          <push-button style="width:35px;margin-left:7px">=</push-button><push-button style="width:35px;margin-left:8px">+</push-button><push-button style="width:27px;margin-left:8px">-</push-button><push-button w="20" style="width:40px;margin:0 2px 0 8px">...</push-button></div>
        <tf-plot></tf-plot>
      </div>
      <v-slider style="width:20px"></v-slider>
    </div>`; }
}
def('iv-app', App);
def('group-box', Group); def('mdi-window', MdiWindow); def('text-label', Label); def('iv-menu', Menu); def('iv-tab', Tab);
def('dock-title', DockTitle); def('push-button', Btn); def('radio-item', Radio); def('check-item', Check); def('spin-box', Spin);
def('slide-bar', Slider); def('v-slider', VSlider); def('cap-btn', CapBtn); def('hand-volume', HandVolume); def('tf-plot', TfPlot);
</script>
</body>
</html>
